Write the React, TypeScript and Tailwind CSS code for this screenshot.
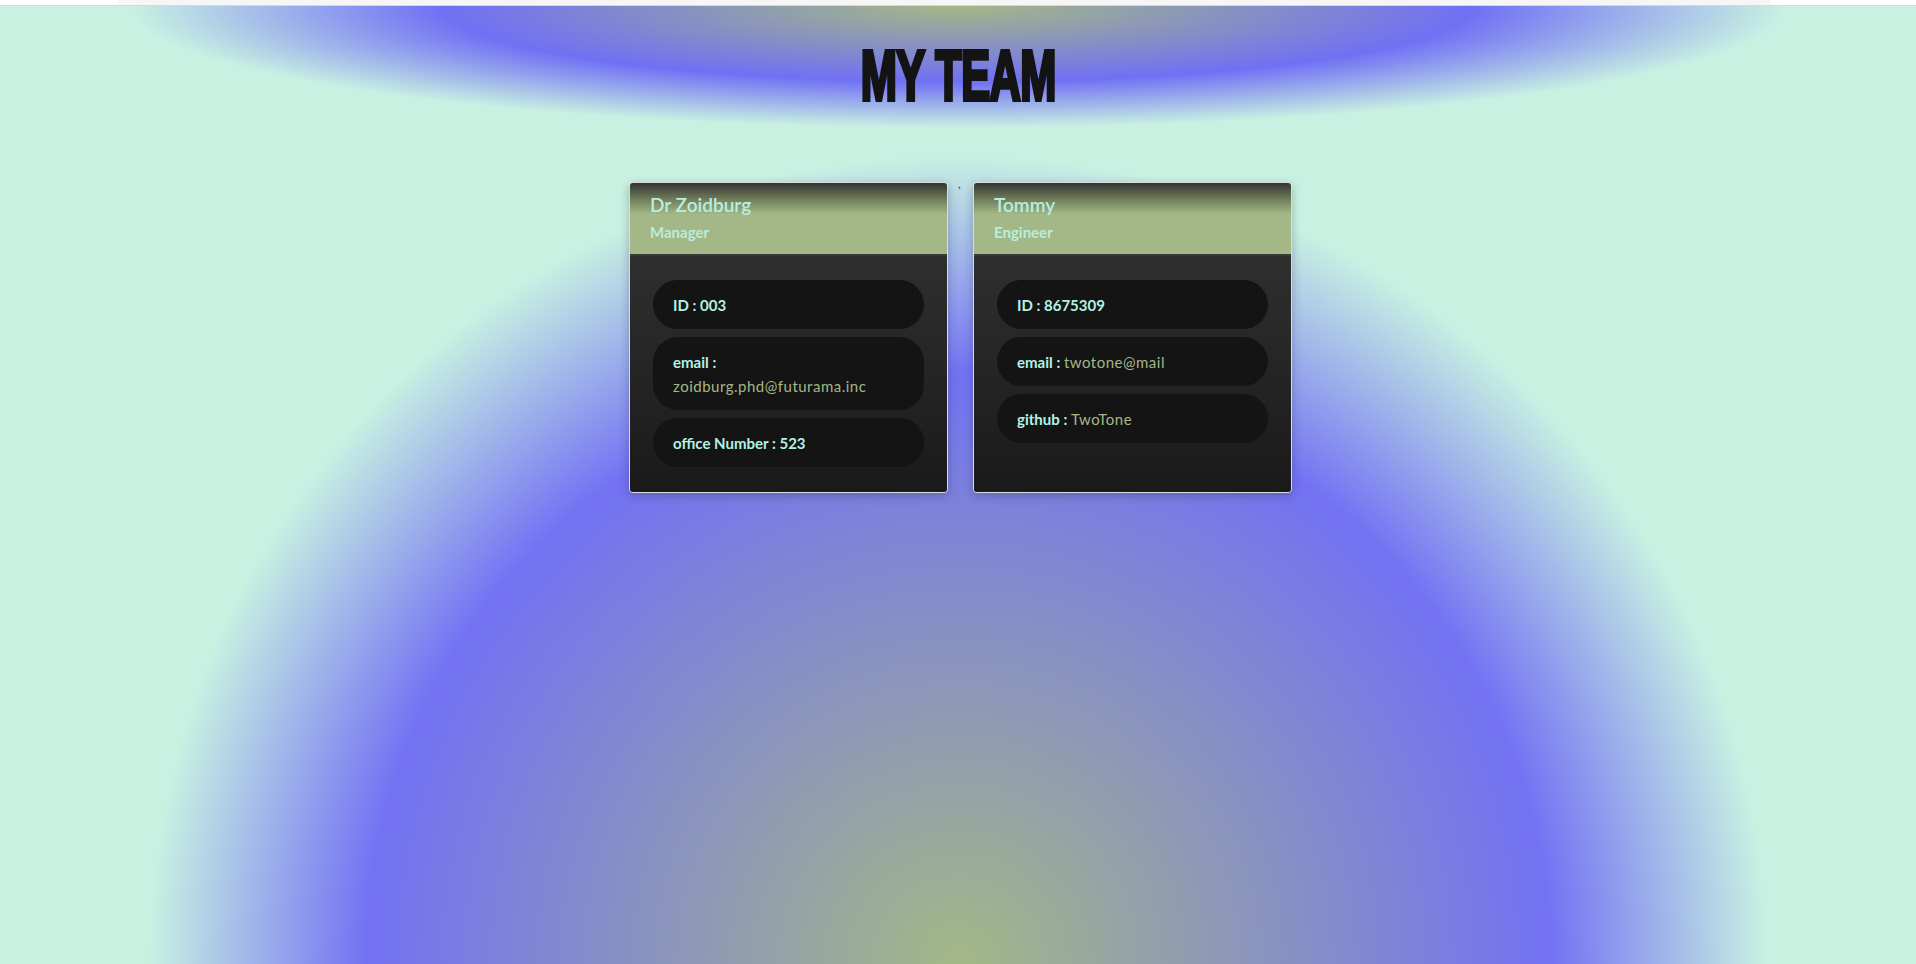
type Member = {
  name: string;
  role: string;
  rows: { label: string; value: string; accent?: boolean }[];
};

const team: Member[] = [
  {
    name: 'Dr Zoidburg',
    role: 'Manager',
    rows: [
      { label: 'ID', value: '003' },
      { label: 'email', value: 'zoidburg.phd@futurama.inc', accent: true },
      { label: 'office Number', value: '523' },
    ],
  },
  {
    name: 'Tommy',
    role: 'Engineer',
    rows: [
      { label: 'ID', value: '8675309' },
      { label: 'email', value: 'twotone@mail', accent: true },
      { label: 'github', value: 'TwoTone', accent: true },
    ],
  },
];

function Card({ member }: { member: Member }) {
  return (
    <div className="flex w-[319px] flex-col overflow-hidden rounded-[4px] border border-[#dcdcdc] shadow-[0_3px_10px_rgba(40,40,60,0.3)]">
      {/* header */}
      <div className="border-b-2 border-[#3a3a3a] bg-[linear-gradient(to_bottom,#333333_0%,#6e7a58_22%,#a3b886_44%,#a3b886_100%)] px-[20px] pt-[10px] pb-[13px]">
        <div className="text-[19px] font-semibold leading-[23px] text-[#b6efe2]">{member.name}</div>
        <div className="mt-[7px] text-[15px] font-bold leading-[18px] text-[#b9eddd]">{member.role}</div>
      </div>
      {/* body */}
      <div className="flex flex-1 flex-col gap-[8px] bg-[linear-gradient(to_bottom,#2f2f2f_0%,#1a1a1a_100%)] px-[23px] pt-[24px] pb-[25px]">
        {member.rows.map((r) => (
          <div
            key={r.label}
            className="rounded-[25px] bg-[#141414] px-[20px] py-[12.5px] text-[15px] leading-[24px]"
          >
            <span className="font-bold text-[#b3f2e3]">{r.label} : </span>
            <span className={r.accent ? 'tracking-[0.5px] text-[#a3b886]' : 'font-bold text-[#b3f2e3]'}>
              {r.value}
            </span>
          </div>
        ))}
      </div>
    </div>
  );
}

export default function App() {
  return (
    <div className="relative h-[964px] overflow-hidden bg-[#c9f1e2] bg-[radial-gradient(circle_810px_at_50%_100%,#a3b886_0%,#7272f3_73%,#c9f1e2_100%)] font-['Lato','Noto_Sans',sans-serif]">
      {/* top strip */}
      <div className="flex h-[6px] border-b border-[#d8d8d8] bg-white">
        <div className="ml-[118px] h-[5px] w-[1652px] bg-[#f6f6f6]" />
      </div>

      <header className="h-[125px] bg-[radial-gradient(ellipse_830px_122px_at_50%_0%,#a3b886_0%,#7070f4_62%,#c9f1e2_100%)] pt-[35px] text-center">
        <h1 className="inline-block origin-center scale-x-[0.62] font-['Liberation_Sans','Arial',sans-serif] text-[70px] font-bold leading-[70px] tracking-[-1px] text-[#141414] [-webkit-text-stroke:4px_#141414]">
          MY TEAM
        </h1>
      </header>

      <main className="flex items-stretch justify-center pt-[51px] pl-[5px]">
        <Card member={team[0]} />
        <span className="mx-[10px] mt-[-4px] w-[5px] text-[12px] leading-[12px] text-[#22337a]">,</span>
        <Card member={team[1]} />
      </main>
    </div>
  );
}
